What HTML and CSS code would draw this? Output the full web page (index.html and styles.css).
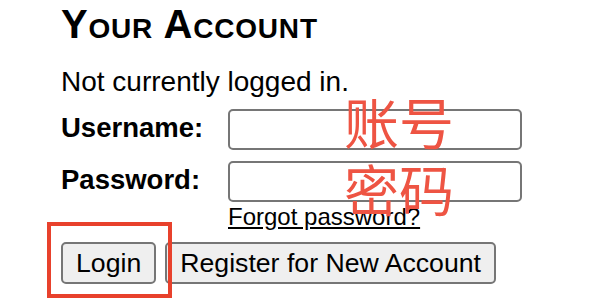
FILE: index.html
```html
<!DOCTYPE html>
<html lang="en">
<head>
<meta charset="utf-8">
<title>Your Account</title>
<link rel="stylesheet" href="styles.css">
</head>
<body>
<div class="page">
  <h1 class="title">Your Account</h1>
  <p class="status">Not currently logged in.</p>
  <form class="login-form">
    <label class="field-label" for="user">Username:</label>
    <div class="field-cell">
      <input class="text-input" id="user" type="text">
    </div>
    <label class="field-label" for="pass">Password:</label>
    <div class="field-cell">
      <input class="text-input" id="pass" type="password">
      <a class="forgot" href="#">Forgot password?</a>
    </div>
  </form>
  <div class="actions">
    <button class="btn" type="button">Login</button>
    <button class="btn" type="button">Register for New Account</button>
  </div>
  <span class="note note-user">账号</span>
  <span class="note note-pass">密码</span>
  <span class="highlight"></span>
</div>
</body>
</html>
```
FILE: styles.css
```css
html, body {
  margin: 0;
  padding: 0;
  background: #ffffff;
}

.page {
  position: relative;
  width: 600px;
  height: 307px;
  overflow: hidden;
  padding-left: 61px;
  box-sizing: border-box;
  font-family: "Liberation Sans", Arial, sans-serif;
  color: #000;
}

.title {
  margin: 1px 0 0;
  font-size: 40px;
  line-height: 46px;
  font-weight: bold;
  font-variant: small-caps;
  letter-spacing: 0.8px;
}

.status {
  margin: 19px 0 0;
  font-size: 28px;
  line-height: 32px;
}

.login-form {
  margin: 11px 0 0;
  display: grid;
  grid-template-columns: 167px 294px;
  row-gap: 11px;
  align-items: start;
}

.field-label {
  padding-top: 3px;
  font-size: 27.5px;
  line-height: 32px;
  font-weight: bold;
}

.field-cell {
  display: flex;
  flex-direction: column;
  align-items: flex-start;
}

.text-input {
  display: block;
  width: 294px;
  height: 41px;
  box-sizing: border-box;
  margin: 0;
  border: 2px solid #767676;
  border-radius: 5px;
  background: #fff;
  font-family: inherit;
  font-size: 26px;
}

.forgot {
  margin-top: 2px;
  font-size: 24px;
  line-height: 26px;
  color: #000;
  text-decoration: underline;
}

.actions {
  margin-top: 12px;
  display: flex;
  gap: 9px;
}

.btn {
  margin: 0;
  padding: 4px 13px;
  border: 2px solid #767676;
  border-radius: 5px;
  background: #efefef;
  color: #000;
  font-family: "Liberation Sans", Arial, sans-serif;
  font-size: 26.67px;
  line-height: 30px;
}

.note {
  position: absolute;
  left: 344px;
  font-family: "Noto Sans CJK SC", sans-serif;
  font-size: 55px;
  line-height: 55px;
  color: #ee5443;
  white-space: nowrap;
}

.note-user {
  top: 93px;
}

.note-pass {
  top: 160px;
}

.highlight {
  position: absolute;
  left: 47px;
  top: 222px;
  width: 125px;
  height: 76px;
  box-sizing: border-box;
  border: 4px solid #e8412c;
}
```
